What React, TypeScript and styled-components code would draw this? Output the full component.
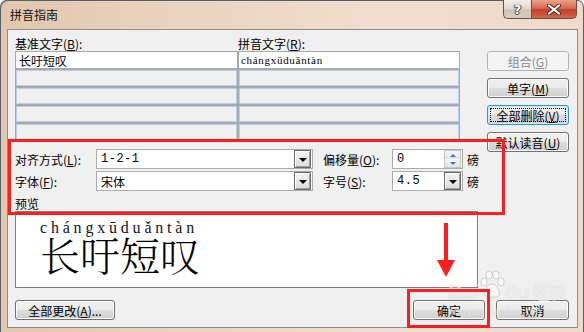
import React from "react";
import styled, { createGlobalStyle, css } from "styled-components";

const GlobalStyle = createGlobalStyle`
  html, body { margin: 0; padding: 0; background: #ffffff; }
  body {
    font-family: "Noto Sans CJK SC", "Liberation Sans", sans-serif;
    font-size: 12px;
    color: #000;
  }
`;

const UI_FONT = `"Noto Sans CJK SC", "Liberation Sans", sans-serif`;

const Window = styled.div`
  position: relative;
  width: 584px;
  height: 332px;
  overflow: hidden;
  border-radius: 7px 7px 0 0;
  background: linear-gradient(90deg, #e2c6ae 0%, #ead3bf 30%, #f1dece 65%, #efdaca 100%);
  box-shadow: inset 1px 1px 0 #54606c, inset -1px 0 0 #54606c;
  display: flex;
  flex-direction: column;
`;

const TitleBar = styled.div`
  height: 29px;
  display: flex;
  align-items: flex-start;
  padding-left: 10px;
  flex-shrink: 0;
`;

const Title = styled.div`
  line-height: 30px;
  font-size: 12px;
  color: #111;
`;

const Caption = styled.div`
  margin-left: auto;
  margin-right: 7px;
  display: flex;
  height: 19px;
`;

const CaptionButton = styled.div<{ $kind: "help" | "close" }>`
  height: 19px;
  box-sizing: border-box;
  display: flex;
  align-items: center;
  justify-content: center;
  border: 1px solid #5e524a;
  border-top: none;
  ${({ $kind }) =>
    $kind === "help"
      ? css`
          width: 28px;
          border-right: none;
          border-radius: 0 0 0 5px;
          background: linear-gradient(#f3eee9 0%, #e2d9d1 45%, #cfc3b8 55%, #d8cdc3 100%);
        `
      : css`
          width: 46px;
          border-radius: 0 0 5px 0;
          background: linear-gradient(#eaa28c 0%, #d8694f 45%, #c2402a 55%, #d2674c 100%);
        `}
`;

const HelpGlyph = styled.span`
  font-family: "DejaVu Sans", sans-serif;
  font-weight: bold;
  font-size: 13px;
  line-height: 1;
  color: #fff;
  text-shadow: 0 0 1px #333, 0 0 1px #333, 1px 0 0 #555, -1px 0 0 #555, 0 1px 0 #555;
`;

const Client = styled.div`
  box-sizing: border-box;
  height: 299px;
  margin: 0 6px 0 7px;
  border: 1px solid #8e8e8e;
  background: #f0f0f0;
  padding: 6px 8px 0 7px;
  display: flex;
  flex-direction: column;
`;

const Main = styled.div`
  display: flex;
  align-items: flex-start;
`;

const LeftCol = styled.div`
  width: 465px;
  display: flex;
  flex-direction: column;
`;

const RightCol = styled.div`
  margin-left: auto;
  width: 82px;
  padding-top: 15px;
  display: flex;
  flex-direction: column;
  gap: 7px;
`;

const HeaderRow = styled.div`
  display: grid;
  grid-template-columns: 223px 1fr;
  height: 15px;
  line-height: 15px;
`;

const Table = styled.div`
  display: grid;
  grid-template-columns: 221px 220px;
  grid-auto-rows: 16px;
  gap: 2px;
  width: fit-content;
  border: 1px solid #a9a9a9;
  background: #a9a9a9;
`;

const Cell = styled.div<{ $filled?: boolean; $pinyin?: boolean }>`
  box-sizing: border-box;
  display: flex;
  align-items: center;
  padding-left: 3px;
  white-space: nowrap;
  overflow: hidden;
  ${({ $filled }) =>
    $filled
      ? css`
          background: #ffffff;
        `
      : css`
          background: #f0f0f0;
          border: 1px solid #b6cfea;
        `}
  ${({ $pinyin }) =>
    $pinyin &&
    css`
      font-family: "Liberation Serif", serif;
      font-size: 11px;
      letter-spacing: 0.7px;
      padding-left: 2px;
    `}
`;

const Options = styled.div`
  margin-top: 8px;
  display: flex;
  flex-direction: column;
  gap: 2px;
`;

const OptRow = styled.div`
  height: 20px;
  display: flex;
  align-items: center;
`;

const OptLabel = styled.div<{ $w: number; $gap?: number }>`
  width: ${({ $w }) => $w}px;
  margin-left: ${({ $gap }) => $gap ?? 0}px;
  white-space: nowrap;
`;

const Field = styled.div<{ $w: number }>`
  box-sizing: border-box;
  width: ${({ $w }) => $w}px;
  height: 20px;
  border: 1px solid #ababab;
  background: #ffffff;
  display: flex;
  align-items: center;
  padding: 0 1px 0 4px;
`;

const FieldText = styled.span<{ $mono?: boolean }>`
  flex: 1;
  font-family: ${({ $mono }) => ($mono ? `"Liberation Mono", monospace` : UI_FONT)};
  font-size: 12px;
  letter-spacing: ${({ $mono }) => ($mono ? "0.5px" : "0")};
`;

const DropButton = styled.div`
  box-sizing: border-box;
  width: 17px;
  height: 18px;
  border: 1px solid #6a6a6a;
  box-shadow: inset 1px 1px 0 #ffffff, inset -1px -1px 0 #a0a0a0;
  background: linear-gradient(#f4f4f4, #dcdcdc);
  display: flex;
  align-items: center;
  justify-content: center;
  &::before {
    content: "";
    border-left: 4px solid transparent;
    border-right: 4px solid transparent;
    border-top: 4px solid #000;
    margin-top: 1px;
  }
`;

const Spin = styled.div`
  box-sizing: border-box;
  width: 17px;
  height: 18px;
  display: flex;
  flex-direction: column;
  border: 1px solid #c5c5c5;
`;

const SpinHalf = styled.div<{ $up?: boolean }>`
  flex: 1;
  display: flex;
  align-items: center;
  justify-content: center;
  background: linear-gradient(#f6f6f6, #e2e2e2);
  &::before {
    content: "";
    border-left: 3px solid transparent;
    border-right: 3px solid transparent;
    ${({ $up }) =>
      $up
        ? css`
            border-bottom: 3px solid #4b6db0;
          `
        : css`
            border-top: 3px solid #4b6db0;
          `}
  }
`;

const Unit = styled.span`
  margin-left: 4px;
`;

const PreviewLabel = styled.div`
  margin-top: 6px;
  line-height: 14px;
  height: 14px;
`;

const PreviewBox = styled.div`
  box-sizing: border-box;
  width: 463px;
  height: 77px;
  border: 1px solid #7f7f7f;
  background: #ffffff;
  padding: 8px 0 0 24px;
`;

const Pinyin = styled.div`
  font-family: "Liberation Serif", "DejaVu Serif", serif;
  font-size: 16px;
  line-height: 16px;
  letter-spacing: 3.8px;
  color: #121226;
`;

const Hanzi = styled.div`
  font-family: "Noto Serif CJK SC", "Noto Sans CJK SC", serif;
  font-size: 40px;
  line-height: 36px;
  font-weight: 300;
  color: #000;
`;

const BottomRow = styled.div`
  margin-top: 12px;
  display: flex;
  align-items: center;
  gap: 11px;
`;

const Spacer = styled.div`
  flex: 1;
`;

const Btn = styled.div<{ $w?: number; $state?: "normal" | "disabled" | "focus" }>`
  position: relative;
  box-sizing: border-box;
  width: ${({ $w }) => $w ?? 82}px;
  height: 20px;
  border-radius: 3px;
  display: flex;
  align-items: center;
  justify-content: center;
  font-family: ${UI_FONT};
  font-size: 12px;
  white-space: nowrap;
  ${({ $state }) => {
    if ($state === "disabled")
      return css`
        border: 1px solid #adb2b5;
        background: #f4f4f4;
        color: #8a8a8a;
      `;
    if ($state === "focus")
      return css`
        border: 1px solid #2b95d3;
        box-shadow: inset 0 0 0 1px #c6ecfb;
        background: linear-gradient(#f2f2f2 0%, #ebebeb 48%, #dddddd 52%, #cfcfcf 100%);
        color: #000;
        &::after {
          content: "";
          position: absolute;
          inset: 2px 2px 2px 2px;
          border: 1px dotted #000;
        }
      `;
    return css`
      border: 1px solid #707070;
      box-shadow: inset 0 0 0 1px #fbfbfb;
      background: linear-gradient(#f2f2f2 0%, #ebebeb 48%, #dddddd 52%, #cfcfcf 100%);
      color: #000;
    `;
  }}
`;

const Key = styled.span`
  text-decoration: underline;
  text-underline-offset: 1px;
`;

const RedBox = styled.div<{ $x: number; $y: number; $w: number; $h: number }>`
  position: absolute;
  box-sizing: border-box;
  left: ${({ $x }) => $x}px;
  top: ${({ $y }) => $y}px;
  width: ${({ $w }) => $w}px;
  height: ${({ $h }) => $h}px;
  border: 3px solid #ff1e1e;
  pointer-events: none;
`;

const Arrow = styled.svg`
  position: absolute;
  left: 436px;
  top: 222px;
`;

const Watermark = styled.div`
  position: absolute;
  left: 448px;
  top: 268px;
  display: flex;
  flex-direction: column;
  align-items: flex-start;
  color: rgba(255, 255, 255, 0.6);
  text-shadow: 0 0 1px rgba(150, 150, 150, 0.4);
  pointer-events: none;
`;

const WmMain = styled.div`
  display: flex;
  align-items: flex-end;
  font-family: "Liberation Sans", sans-serif;
  font-weight: bold;
  font-size: 20px;
  line-height: 20px;
  height: 34px;
`;

const WmCn = styled.span`
  font-family: "Noto Sans CJK SC", sans-serif;
  font-size: 17px;
  margin-left: 3px;
`;

const WmSub = styled.div`
  font-family: "Liberation Sans", sans-serif;
  font-size: 11px;
  margin-top: 3px;
  letter-spacing: 0.3px;
`;

const Paw = () => (
  <svg width="26" height="30" viewBox="0 0 26 30" style={{ marginBottom: 2 }}>
    <g fill="rgba(255,255,255,0.55)" stroke="rgba(150,150,150,0.4)" strokeWidth="1">
      <ellipse cx="5" cy="12" rx="3.2" ry="4" />
      <ellipse cx="10" cy="5" rx="3.2" ry="4" />
      <ellipse cx="17" cy="5" rx="3.2" ry="4" />
      <ellipse cx="22" cy="12" rx="3.2" ry="4" />
      <path d="M13 14 C8 14 5 21 6 25 C7 28 11 27 13 27 C15 27 19 28 20 25 C21 21 18 14 13 14 Z" />
    </g>
  </svg>
);

const rows = [0, 1, 2, 3];

export default function App() {
  return (
    <>
      <GlobalStyle />
      <Window>
        <TitleBar>
          <Title>拼音指南</Title>
          <Caption>
            <CaptionButton $kind="help">
              <HelpGlyph>?</HelpGlyph>
            </CaptionButton>
            <CaptionButton $kind="close">
              <svg width="14" height="11" viewBox="0 0 14 11">
                <path d="M2 1.5 L12 9.5 M12 1.5 L2 9.5" stroke="#4a2a22" strokeWidth="4" strokeLinecap="round" />
                <path d="M2 1.5 L12 9.5 M12 1.5 L2 9.5" stroke="#ffffff" strokeWidth="2.2" strokeLinecap="round" />
              </svg>
            </CaptionButton>
          </Caption>
        </TitleBar>

        <Client>
          <Main>
            <LeftCol>
              <HeaderRow>
                <span>
                  基准文字(<Key>B</Key>):
                </span>
                <span>
                  拼音文字(<Key>R</Key>):
                </span>
              </HeaderRow>
              <Table>
                <Cell $filled>长吁短叹</Cell>
                <Cell $filled $pinyin>
                  chángxūduǎntàn
                </Cell>
                {rows.map((r) => (
                  <React.Fragment key={r}>
                    <Cell />
                    <Cell />
                  </React.Fragment>
                ))}
              </Table>

              <Options>
                <OptRow>
                  <OptLabel $w={81}>
                    对齐方式(<Key>L</Key>):
                  </OptLabel>
                  <Field $w={217}>
                    <FieldText $mono>1-2-1</FieldText>
                    <DropButton />
                  </Field>
                  <OptLabel $w={69} $gap={10}>
                    偏移量(<Key>O</Key>):
                  </OptLabel>
                  <Field $w={71}>
                    <FieldText $mono>0</FieldText>
                    <Spin>
                      <SpinHalf $up />
                      <SpinHalf />
                    </Spin>
                  </Field>
                  <Unit>磅</Unit>
                </OptRow>
                <OptRow>
                  <OptLabel $w={81}>
                    字体(<Key>F</Key>):
                  </OptLabel>
                  <Field $w={217}>
                    <FieldText>宋体</FieldText>
                    <DropButton />
                  </Field>
                  <OptLabel $w={69} $gap={10}>
                    字号(<Key>S</Key>):
                  </OptLabel>
                  <Field $w={71}>
                    <FieldText $mono>4.5</FieldText>
                    <DropButton />
                  </Field>
                  <Unit>磅</Unit>
                </OptRow>
              </Options>

              <PreviewLabel>预览</PreviewLabel>
              <PreviewBox>
                <Pinyin>chángxūduǎntàn</Pinyin>
                <Hanzi>长吁短叹</Hanzi>
              </PreviewBox>
            </LeftCol>

            <RightCol>
              <Btn $state="disabled">
                组合(<Key>G</Key>)
              </Btn>
              <Btn>
                单字(<Key>M</Key>)
              </Btn>
              <Btn $state="focus">
                全部删除(<Key>V</Key>)
              </Btn>
              <Btn>
                默认读音(<Key>U</Key>)
              </Btn>
            </RightCol>
          </Main>

          <BottomRow>
            <Btn $w={100}>
              全部更改(<Key>A</Key>)...
            </Btn>
            <Spacer />
            <Btn $w={72}>确定</Btn>
            <Btn $w={73}>取消</Btn>
          </BottomRow>
        </Client>

        <Watermark>
          <WmMain>
            Bai
            <Paw />
            du
            <WmCn>经验</WmCn>
          </WmMain>
          <WmSub>jingyan.baidu.com</WmSub>
        </Watermark>

        <RedBox $x={8} $y={139} $w={497} $h={76} />
        <RedBox $x={407} $y={289} $w={83} $h={39} />
        <Arrow width="20" height="56" viewBox="0 0 20 56">
          <rect x="8" y="1" width="4" height="40" fill="#ff1e1e" />
          <polygon points="1,38 19,38 10,55" fill="#ff1e1e" />
        </Arrow>
      </Window>
    </>
  );
}
